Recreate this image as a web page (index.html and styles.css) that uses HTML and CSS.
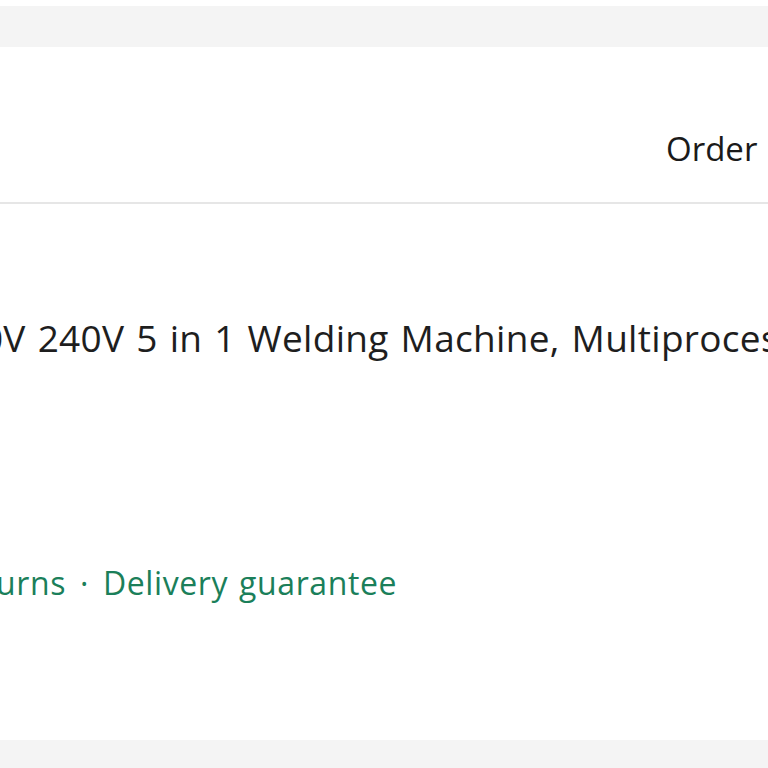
FILE: index.html
```html
<!DOCTYPE html>
<html lang="en">
<head>
<meta charset="utf-8">
<title>Order</title>
<link rel="stylesheet" href="styles.css">
</head>
<body>
<div class="page">
  <div class="top-gap"></div>
  <div class="band"></div>
  <main class="card">
    <header class="card-head">
      <span class="head-label">Order details</span>
    </header>
    <section class="card-body">
      <h1 class="title">110V 240V 5 in 1 Welding Machine, Multiprocess MIG Welder</h1>
      <p class="perks">Free returns <span class="dot">·</span> Delivery guarantee</p>
    </section>
  </main>
  <div class="band bottom"></div>
</div>
</body>
</html>
```

FILE: styles.css
```css
html, body {
  margin: 0;
  padding: 0;
  background: #ffffff;
}
body {
  font-family: "Open Sans", "Noto Sans", sans-serif;
  color: #1a1a1a;
  overflow: hidden;
}
.page {
  width: 768px;
  height: 768px;
  display: flex;
  flex-direction: column;
  overflow: hidden;
}
.top-gap {
  height: 6px;
  flex: none;
}
.band {
  height: 41px;
  flex: none;
  background: #f4f4f4;
}
.band.bottom {
  height: 28px;
}
.card {
  flex: none;
  height: 693px;
  background: #ffffff;
  display: flex;
  flex-direction: column;
}
.card-head {
  height: 157px;
  flex: none;
  box-sizing: border-box;
  padding-left: 666px;
  padding-top: 79px;
  border-bottom: 2px solid #e6e6e6;
  white-space: nowrap;
  overflow: hidden;
}
.head-label {
  font-size: 33px;
  line-height: 45px;
  color: #1a1a1a;
  word-spacing: 4px;
}
.card-body {
  flex: 1;
  overflow: hidden;
}
.title {
  margin: 109px 0 0 -61px;
  font-size: 37px;
  font-weight: 400;
  line-height: 50px;
  letter-spacing: 0.3px;
  word-spacing: 2px;
  white-space: nowrap;
  color: #1e1e1e;
}
.perks {
  margin: 198px 0 0 -127px;
  font-size: 32px;
  line-height: 44px;
  letter-spacing: 0.6px;
  word-spacing: 2px;
  white-space: nowrap;
  color: #1b7f5a;
}
.dot {
  margin: 0 3px;
}
```
